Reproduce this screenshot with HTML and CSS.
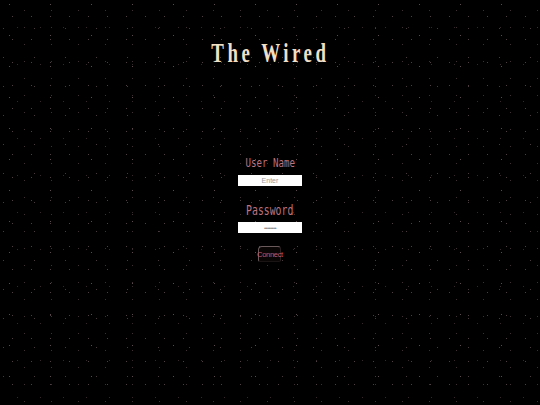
FILE: index.html
```html
<!DOCTYPE html>
<html>
<head>
<meta charset="utf-8">
<title>The Wired</title>
<link rel="stylesheet" href="styles.css">
</head>
<body>
<main class="page">
  <h1 class="title">The Wired</h1>
  <form class="login">
    <label class="label" for="user"><span class="squeeze">User Name</span></label>
    <input class="field" id="user" type="text" placeholder="Enter">
    <label class="label label-pass" for="pass"><span class="squeeze">Password</span></label>
    <input class="field field-pass" id="pass" type="password" value="pppppppp">
    <button class="connect" type="button">Connect</button>
  </form>
</main>
</body>
</html>
```
FILE: styles.css
```css
html, body {
  margin: 0;
  height: 100%;
}
body {
  background-color: #000;
  background-image:
    radial-gradient(circle at 50% 50%, #4e3e42 0.5px, transparent 1px),
    radial-gradient(circle at 50% 50%, #3e3034 0.5px, transparent 1px),
    radial-gradient(circle at 50% 50%, #483a3e 0.5px, transparent 1px),
    radial-gradient(circle at 50% 50%, #342a2c 0.5px, transparent 1px),
    radial-gradient(circle at 50% 50%, #5a4a4e 0.5px, transparent 1px);
  background-size: 19px 23px, 27px 17px, 31px 29px, 23px 37px, 41px 31px;
  background-position: 3px 5px, 11px 2px, 19px 14px, 6px 9px, 30px 20px;
  overflow: hidden;
}
.page {
  display: flex;
  flex-direction: column;
  align-items: center;
  padding-top: 37px;
}
.title {
  margin: 0;
  font-family: "Liberation Serif", "DejaVu Serif", serif;
  font-weight: bold;
  font-size: 27px;
  letter-spacing: 5px;
  line-height: 32px;
  color: #f0dfc4;
  transform: scaleX(0.7);
}
.login {
  display: flex;
  flex-direction: column;
  align-items: center;
  margin-top: 86px;
}
.label {
  display: block;
  font-family: "DejaVu Sans Mono", monospace;
  font-size: 13px;
  line-height: 16px;
  color: #bc7480;
  margin-bottom: 4px;
}
.squeeze {
  display: inline-block;
  transform: scaleX(0.7);
}
.label-pass {
  margin-top: 16px;
  font-size: 14px;
}
.field {
  box-sizing: border-box;
  width: 64px;
  height: 11px;
  margin: 0;
  padding: 0;
  border: none;
  background: #fff;
  font-family: "Liberation Sans", Arial, sans-serif;
  font-size: 7px;
  text-align: center;
  color: #999;
  outline: none;
}
.field::placeholder {
  color: #9a9a9a;
}
.field-pass {
  font-size: 6px;
  letter-spacing: -0.6px;
  color: #8a8a8a;
}
.connect {
  margin-top: 13px;
  width: 23px;
  height: 16px;
  padding: 0;
  box-sizing: border-box;
  background: #0a0606;
  border: 1px solid #6a5a5c;
  border-bottom-color: #1a1414;
  border-right-color: #2a2022;
  border-radius: 4px 3px 2px 2px;
  font-family: "Liberation Sans", Arial, sans-serif;
  font-size: 7.5px;
  letter-spacing: -0.3px;
  color: #c8586a;
  white-space: nowrap;
  display: flex;
  align-items: center;
  justify-content: center;
  overflow: visible;
}
```
